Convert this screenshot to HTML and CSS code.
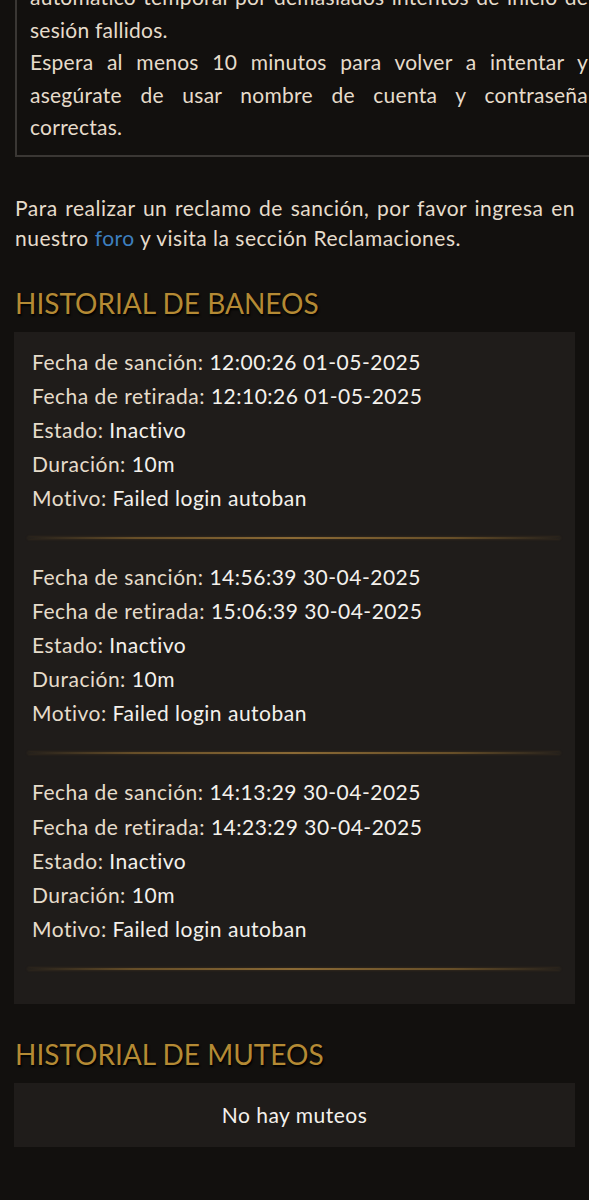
FILE: index.html
```html
<!DOCTYPE html>
<html lang="es">
<head>
<meta charset="utf-8">
<title>Historial de sanciones</title>
<link rel="stylesheet" href="styles.css">
</head>
<body>
<main class="page">
  <section class="notice">
    <p>automático temporal por demasiados intentos de inicio de sesión fallidos.</p>
    <p>Espera al menos 10 minutos para volver a intentar y asegúrate de usar nombre de cuenta y contraseña correctas.</p>
  </section>

  <p class="claim">Para realizar un reclamo de sanción, por favor ingresa en nuestro <a href="#" class="link">foro</a> y visita la sección Reclamaciones.</p>

  <h2 class="heading">HISTORIAL DE BANEOS</h2>
  <section class="card">
    <div class="entry">
      <div class="row"><span class="label">Fecha de sanción:</span> <span class="value">12:00:26 01-05-2025</span></div>
      <div class="row"><span class="label">Fecha de retirada:</span> <span class="value">12:10:26 01-05-2025</span></div>
      <div class="row"><span class="label">Estado:</span> <span class="value">Inactivo</span></div>
      <div class="row"><span class="label">Duración:</span> <span class="value">10m</span></div>
      <div class="row"><span class="label">Motivo:</span> <span class="value">Failed login autoban</span></div>
    </div>
    <hr class="sep">
    <div class="entry">
      <div class="row"><span class="label">Fecha de sanción:</span> <span class="value">14:56:39 30-04-2025</span></div>
      <div class="row"><span class="label">Fecha de retirada:</span> <span class="value">15:06:39 30-04-2025</span></div>
      <div class="row"><span class="label">Estado:</span> <span class="value">Inactivo</span></div>
      <div class="row"><span class="label">Duración:</span> <span class="value">10m</span></div>
      <div class="row"><span class="label">Motivo:</span> <span class="value">Failed login autoban</span></div>
    </div>
    <hr class="sep">
    <div class="entry">
      <div class="row"><span class="label">Fecha de sanción:</span> <span class="value">14:13:29 30-04-2025</span></div>
      <div class="row"><span class="label">Fecha de retirada:</span> <span class="value">14:23:29 30-04-2025</span></div>
      <div class="row"><span class="label">Estado:</span> <span class="value">Inactivo</span></div>
      <div class="row"><span class="label">Duración:</span> <span class="value">10m</span></div>
      <div class="row"><span class="label">Motivo:</span> <span class="value">Failed login autoban</span></div>
    </div>
    <hr class="sep">
  </section>

  <h2 class="heading">HISTORIAL DE MUTEOS</h2>
  <section class="card empty">No hay muteos</section>
</main>
</body>
</html>
```

FILE: styles.css
```css
html, body {
  margin: 0;
  padding: 0;
  background: #12100e;
  overflow: hidden;
}

body {
  font-family: "Lato", "Noto Sans", sans-serif;
  font-size: 21px;
  letter-spacing: 0.5px;
  color: #e6dccb;
}

.page {
  padding: 0 14px;
}

.notice {
  margin: -30px -40px 0 1px;
  padding: 11px 27px 11px 13px;
  border: 2px solid #3a3734;
  border-top: none;
  border-right: none;
}

.notice p {
  margin: 0;
  line-height: 32.5px;
  letter-spacing: 0.25px;
  text-align: justify;
}

.claim {
  margin: 36px 0 0 1px;
  line-height: 30px;
  text-align: justify;
}

.link {
  color: #3d7fbf;
  text-decoration: none;
}

.heading {
  margin: 33px 0 12px 1px;
  font-weight: 400;
  font-size: 28px;
  letter-spacing: 0;
  line-height: 34px;
  color: #b48a34;
  text-shadow: 1px 2px 2px #000;
}

.card {
  background: #1f1c1a;
  padding: 13px 15px 13px 14px;
}

.entry {
  padding-left: 4px;
}

.row {
  line-height: 34.1px;
}

.label {
  color: #e6dccb;
}

.value {
  color: #f4f1ec;
}

.sep {
  height: 2px;
  margin: 22px 0 21px;
  border: none;
  background: linear-gradient(90deg, rgba(150,112,50,0.05) 0%, rgba(150,112,50,0.6) 20%, rgba(165,125,60,0.8) 50%, rgba(150,112,50,0.6) 80%, rgba(150,112,50,0.05) 100%);
  box-shadow: 0 0 3px rgba(150,112,50,0.3);
}

.card.empty {
  height: 64px;
  padding: 0;
  display: flex;
  align-items: center;
  justify-content: center;
  color: #f4f1ec;
}
```
